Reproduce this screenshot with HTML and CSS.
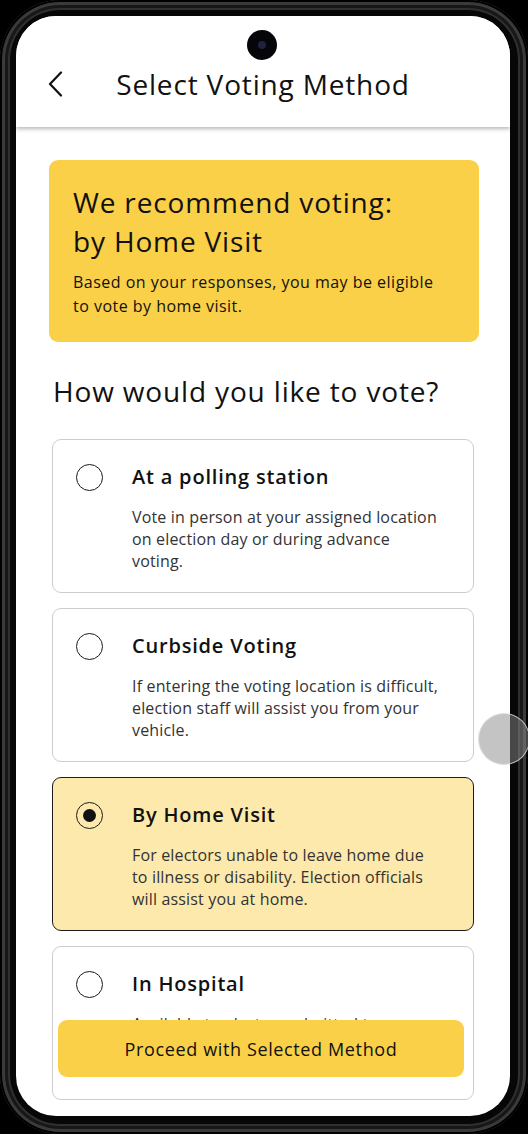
FILE: index.html
```html
<!DOCTYPE html>
<html lang="en">
<head>
<meta charset="utf-8">
<title>Select Voting Method</title>
<link rel="stylesheet" href="styles.css">
</head>
<body>
<div class="device">
  <div class="screen">
    <div class="camera"><span class="lens"></span></div>
    <header class="header">
      <button class="back" aria-label="Back">
        <svg width="16" height="26" viewBox="0 0 16 26"><polyline points="13,1.5 2,13 13,24.5" fill="none" stroke="#111" stroke-width="2.2" stroke-linecap="round" stroke-linejoin="round"/></svg>
      </button>
      <h1 class="title">Select Voting Method</h1>
      <span class="spacer"></span>
    </header>
    <main class="main">
      <section class="rec">
        <h2 class="rec-title">We recommend voting:<br>by Home Visit</h2>
        <p class="rec-text">Based on your responses, you may be eligible to vote by home visit.</p>
      </section>
      <h2 class="question">How would you like to vote?</h2>
      <div class="options">
        <div class="option">
          <span class="radio"></span>
          <h3 class="opt-title">At a polling station</h3>
          <p class="opt-text">Vote in person at your assigned location<br>on election day or during advance<br>voting.</p>
        </div>
        <div class="option">
          <span class="radio"></span>
          <h3 class="opt-title">Curbside Voting</h3>
          <p class="opt-text">If entering the voting location is difficult,<br>election staff will assist you from your<br>vehicle.</p>
        </div>
        <div class="option selected">
          <span class="radio"></span>
          <h3 class="opt-title">By Home Visit</h3>
          <p class="opt-text">For electors unable to leave home due<br>to illness or disability. Election officials<br>will assist you at home.</p>
        </div>
        <div class="option">
          <span class="radio"></span>
          <h3 class="opt-title">In Hospital</h3>
          <p class="opt-text">Available to electors admitted to a<br>hospital or care facility.</p>
        </div>
      </div>
    </main>
    <button class="proceed">Proceed with Selected Method</button>
  </div>
  <span class="assist"></span>
</div>
</body>
</html>
```
FILE: styles.css
```css
html, body {
  margin: 0;
  padding: 0;
  background: #000;
}
body {
  font-family: "Open Sans", "Noto Sans", sans-serif;
  color: #111;
}
.device {
  position: relative;
  width: 528px;
  height: 1134px;
  box-sizing: border-box;
  padding: 16px 18px 18px 16px;
  border-radius: 60px;
  background: #070707;
  box-shadow: inset 0 0 0 2px #000, inset 0 0 0 5px #3a3a3a, inset 0 0 0 8px #171717, inset 0 0 0 10px #303030;
}
.screen {
  position: relative;
  height: 1100px;
  border-radius: 40px;
  overflow: hidden;
  background: #fff;
}
.camera {
  position: absolute;
  top: 14px;
  left: 50%;
  margin-left: -16px;
  width: 30px;
  height: 30px;
  border-radius: 50%;
  background: #05050a;
  display: flex;
  align-items: center;
  justify-content: center;
  z-index: 3;
}
.lens {
  width: 8px;
  height: 8px;
  border-radius: 50%;
  background: #1c2240;
}
.header {
  height: 111px;
  box-sizing: border-box;
  padding-top: 24px;
  display: grid;
  grid-template-columns: 1fr auto 1fr;
  align-items: center;
  background: #fff;
  box-shadow: 0 2px 4px rgba(0, 0, 0, 0.28);
  position: relative;
  z-index: 2;
}
.back {
  justify-self: start;
  margin-left: 32px;
  padding: 0;
  border: 0;
  background: none;
  display: flex;
}
.title {
  margin: 0;
  font-size: 28px;
  font-weight: 400;
  line-height: 36px;
  letter-spacing: 0.03em;
}
.main {
  padding: 33px 36px 0;
}
.rec {
  margin: 0 -5px 0 -3px;
  padding: 23px 40px 24px 24px;
  background: #f9d047;
  border-radius: 9px;
}
.rec-title {
  margin: 0;
  font-size: 28px;
  font-weight: 400;
  line-height: 39px;
  letter-spacing: 0.03em;
}
.rec-text {
  margin: 9px 0 0;
  font-size: 16px;
  line-height: 24px;
  letter-spacing: 0.03em;
}
.question {
  margin: 31px 0 30px 1px;
  font-size: 28px;
  font-weight: 400;
  line-height: 36px;
  letter-spacing: 0.03em;
}
.options {
  display: flex;
  flex-direction: column;
  gap: 15px;
}
.option {
  display: grid;
  grid-template-columns: 27px 1fr;
  column-gap: 29px;
  padding: 23px 4px 20px 23px;
  border: 1px solid #cdcdcd;
  border-radius: 9px;
  background: #fff;
}
.option:last-child {
  min-height: 154px;
  box-sizing: border-box;
  align-content: start;
}
.option.selected {
  background: #fde9ab;
  border-color: #1c1c1c;
}
.radio {
  grid-column: 1;
  grid-row: 1;
  align-self: center;
  width: 27px;
  height: 27px;
  box-sizing: border-box;
  border: 1.5px solid #1a1a1a;
  border-radius: 50%;
  display: flex;
  align-items: center;
  justify-content: center;
}
.selected .radio::after {
  content: "";
  width: 13px;
  height: 13px;
  border-radius: 50%;
  background: #111;
}
.opt-title {
  grid-column: 2;
  grid-row: 1;
  margin: 0;
  font-size: 20px;
  font-weight: 600;
  line-height: 28px;
  letter-spacing: 0.04em;
}
.opt-text {
  grid-column: 2;
  grid-row: 2;
  margin: 15px 0 0;
  font-size: 16px;
  line-height: 22px;
  letter-spacing: 0.01em;
  color: #333;
}
.proceed {
  position: absolute;
  left: 42px;
  bottom: 39px;
  width: 406px;
  height: 57px;
  border: 0;
  border-radius: 9px;
  background: #f9d047;
  font-family: "Open Sans", "Noto Sans", sans-serif;
  font-size: 18px;
  font-weight: 400;
  letter-spacing: 0.035em;
  color: #111;
  z-index: 4;
}
.assist {
  position: absolute;
  left: 478px;
  top: 713px;
  width: 52px;
  height: 52px;
  box-sizing: border-box;
  border-radius: 50%;
  background: rgba(138, 138, 138, 0.5);
  border: 1.5px solid rgba(235, 235, 235, 0.7);
  z-index: 5;
}
```
